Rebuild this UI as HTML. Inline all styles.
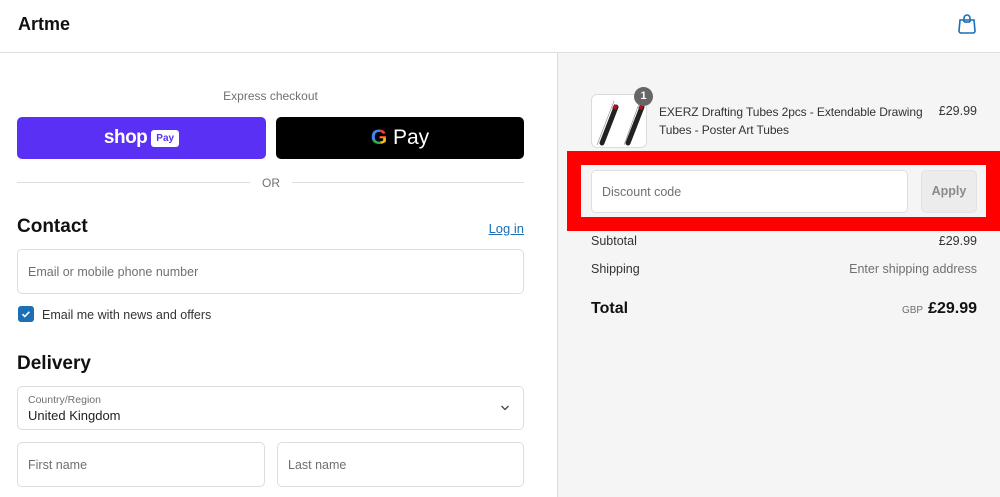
<!DOCTYPE html>
<html><head><meta charset="utf-8">
<style>
*{box-sizing:border-box;margin:0;padding:0}
body{width:1000px;height:497px;overflow:hidden;background:#fff;font-family:"Liberation Sans",sans-serif;position:relative;color:#000}
.a{position:absolute}
.inp{position:absolute;border:1px solid #dedede;border-radius:5px;background:#fff;font-size:12.5px;color:#707070}
</style></head><body>
<div class="a" style="left:0;top:0;width:1000px;height:53px;border-bottom:1px solid #dedede;background:#fff"></div>
<div class="a" style="left:18px;top:14px;font-size:18px;font-weight:bold;color:#111">Artme</div>
<svg class="a" style="left:957px;top:13px" width="20" height="22" viewBox="0 0 20 22" fill="none" stroke="#1c6fb4" stroke-width="1.6"><path d="M3 7h14l1 11a2 2 0 0 1-2 2H4a2 2 0 0 1-2-2z"/><path d="M7 9V5a3 3 0 0 1 6 0v4"/><path d="M7 9h6"/></svg>
<div class="a" style="left:557px;top:53px;width:443px;height:444px;background:#f5f5f5;border-left:1px solid #dedede"></div>

<div class="a" style="left:0;top:89px;width:541px;text-align:center;font-size:12px;color:#707070">Express checkout</div>
<div class="a" style="left:17px;top:117px;width:249px;height:42px;background:#5a31f4;border-radius:5px;color:#fff;display:flex;align-items:center;justify-content:center">
<span style="font-size:19px;font-weight:bold;letter-spacing:-0.5px">shop</span><span style="display:inline-block;background:#fff;color:#5a31f4;font-size:10px;border-radius:3px;padding:3px 5px;margin-left:4px;font-weight:bold">Pay</span></div>
<div class="a" style="left:276px;top:117px;width:248px;height:42px;background:#000;border-radius:5px;color:#fff;text-align:center;line-height:42px;font-size:21px">
<span style="font-weight:bold;background:conic-gradient(#ea4335 0 25%,#fbbc05 0 45%,#34a853 0 70%,#4285f4 0);-webkit-background-clip:text;color:transparent">G</span> Pay</div>
<div class="a" style="left:17px;top:182px;width:233px;height:1px;background:#dedede"></div>
<div class="a" style="left:292px;top:182px;width:232px;height:1px;background:#dedede"></div>
<div class="a" style="left:262px;top:176px;font-size:12px;color:#707070">OR</div>

<div class="a" style="left:17px;top:216px;font-size:19px;font-weight:bold;color:#111">Contact</div>
<div class="a" style="right:476px;top:221px;font-size:13px;color:#1c6fb4;text-decoration:underline">Log in</div>
<div class="inp" style="left:17px;top:249px;width:507px;height:45px;padding:15px 10px">Email or mobile phone number</div>
<div class="a" style="left:18px;top:306px;width:16px;height:16px;background:#1c6fb4;border-radius:3px"><svg width="16" height="16"><path d="M4.5 8.2l2.3 2.3 4.5-4.7" stroke="#fff" stroke-width="1.6" fill="none"/></svg></div>
<div class="a" style="left:42px;top:308px;font-size:12.5px;color:#333">Email me with news and offers</div>

<div class="a" style="left:17px;top:353px;font-size:19px;font-weight:bold;color:#111">Delivery</div>
<div class="inp" style="left:17px;top:386px;width:507px;height:44px;padding:7px 10px"><div style="font-size:10.5px;color:#707070">Country/Region</div><div style="font-size:13px;color:#222;margin-top:2px">United Kingdom</div></div>
<svg class="a" style="left:500px;top:404px" width="10" height="8"><path d="M1.5 2l3.5 3.5L8.5 2" stroke="#444" stroke-width="1.3" fill="none"/></svg>
<div class="inp" style="left:17px;top:442px;width:248px;height:45px;padding:15px 10px">First name</div>
<div class="inp" style="left:277px;top:442px;width:247px;height:45px;padding:15px 10px">Last name</div>

<div class="a" style="left:591px;top:94px;width:56px;height:54px;border:1px solid #dcdcdc;border-radius:6px;background:#fff;overflow:hidden">
<svg width="56" height="54"><path d="M5 50L22 6" stroke="#888" stroke-width="0.6"/><path d="M32 50L48 6" stroke="#888" stroke-width="0.6"/><path d="M10 48L24 12" stroke="#222" stroke-width="5" stroke-linecap="round"/><path d="M36 48L50 12" stroke="#222" stroke-width="5" stroke-linecap="round"/><path d="M22 14L24 10M48 14L50 10" stroke="#a12" stroke-width="4"/></svg></div>
<div class="a" style="left:634px;top:87px;width:19px;height:19px;border-radius:50%;background:#666;color:#fff;font-size:11px;font-weight:bold;text-align:center;line-height:19px">1</div>
<div class="a" style="left:659px;top:103px;width:275px;font-size:12px;line-height:18px;color:#333;letter-spacing:-0.1px">EXERZ Drafting Tubes 2pcs - Extendable Drawing Tubes - Poster Art Tubes</div>
<div class="a" style="right:23px;top:104px;font-size:12.5px;color:#333">£29.99</div>

<div class="a" style="left:567px;top:151px;width:433px;height:80px;background:#ff0000"></div>
<div class="a" style="left:581px;top:165px;width:405px;height:52px;background:#f5f5f5"></div>
<div class="inp" style="left:591px;top:170px;width:317px;height:43px;padding:14px 10px">Discount code</div>
<div class="a" style="left:921px;top:170px;width:56px;height:43px;border:1px solid #e3e3e3;border-radius:5px;background:#ececec;color:#8a8a8a;font-size:12.5px;font-weight:bold;text-align:center;line-height:41px">Apply</div>

<div class="a" style="left:591px;top:234px;font-size:12.5px;color:#333">Subtotal</div>
<div class="a" style="right:23px;top:234px;font-size:12.5px;color:#333">£29.99</div>
<div class="a" style="left:591px;top:262px;font-size:12.5px;color:#333">Shipping</div>
<div class="a" style="right:23px;top:262px;font-size:12.5px;color:#707070">Enter shipping address</div>
<div class="a" style="left:591px;top:300px;font-size:16px;font-weight:bold;color:#111">Total</div>
<div class="a" style="right:23px;top:300px;font-size:16px;font-weight:bold;color:#111"><span style="font-size:10px;font-weight:normal;color:#707070;margin-right:5px">GBP</span>£29.99</div>
</body></html>
